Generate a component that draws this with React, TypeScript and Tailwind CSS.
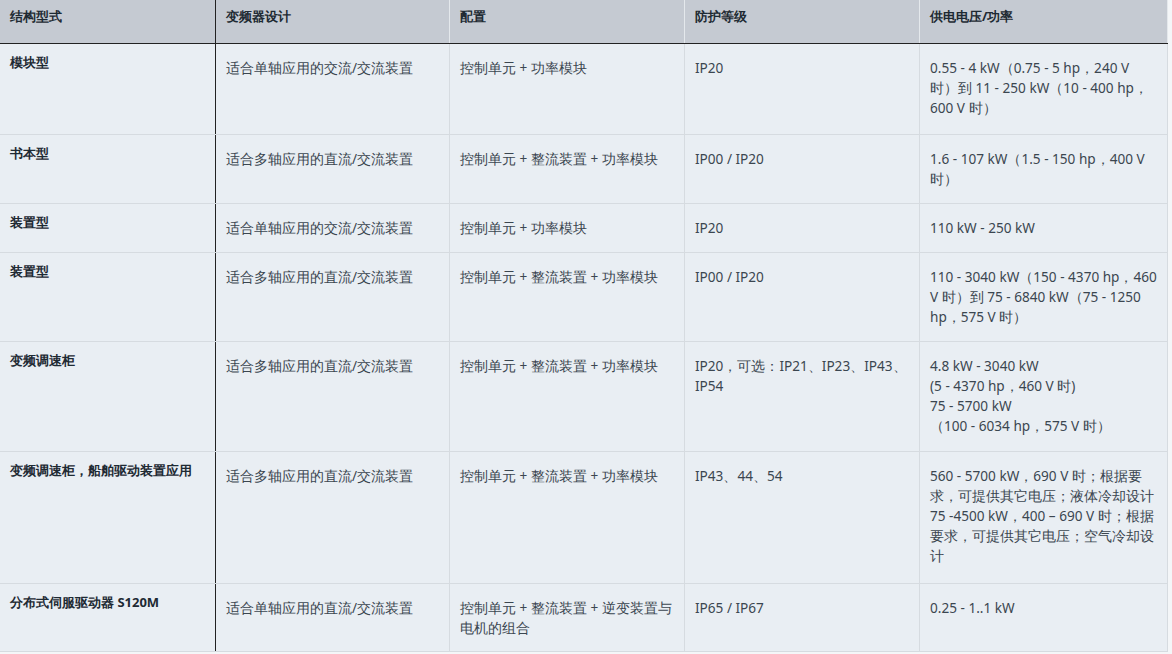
const rows: { h: string; c: string[] }[] = [
  { h: "h-[91px]", c: ["模块型", "适合单轴应用的交流/交流装置", "控制单元 + 功率模块", "IP20", "0.55 - 4 kW（0.75 - 5 hp，240 V 时）到 11 - 250 kW（10 - 400 hp，600 V 时）"] },
  { h: "h-[69px]", c: ["书本型", "适合多轴应用的直流/交流装置", "控制单元 + 整流装置 + 功率模块", "IP00 / IP20", "1.6 - 107 kW（1.5 - 150 hp，400 V 时）"] },
  { h: "h-[49px]", c: ["装置型", "适合单轴应用的交流/交流装置", "控制单元 + 功率模块", "IP20", "110 kW - 250 kW"] },
  { h: "h-[89px]", c: ["装置型", "适合多轴应用的直流/交流装置", "控制单元 + 整流装置 + 功率模块", "IP00 / IP20", "110 - 3040 kW（150 - 4370 hp，460 V 时）到 75 - 6840 kW（75 - 1250 hp，575 V 时）"] },
  { h: "h-[110px]", c: ["变频调速柜", "适合多轴应用的直流/交流装置", "控制单元 + 整流装置 + 功率模块", "IP20，可选：IP21、IP23、IP43、IP54", "4.8 kW - 3040 kW\n(5 - 4370 hp，460 V 时)\n75 - 5700 kW\n（100 - 6034 hp，575 V 时）"] },
  { h: "h-[132px]", c: ["变频调速柜，船舶驱动装置应用", "适合多轴应用的直流/交流装置", "控制单元 + 整流装置 + 功率模块", "IP43、44、54", "560 - 5700 kW，690 V 时；根据要求，可提供其它电压；液体冷却设计 75 -4500 kW，400 – 690 V 时；根据要求，可提供其它电压；空气冷却设计"] },
  { h: "h-[68px]", c: ["分布式伺服驱动器 S120M", "适合单轴应用的直流/交流装置", "控制单元 + 整流装置 + 逆变装置与电机的组合", "IP65 / IP67", "0.25 - 1..1 kW"] },
];
const heads = ["结构型式", "变频器设计", "配置", "防护等级", "供电电压/功率"];
const widths = ["w-[216px]", "w-[234px]", "w-[235px]", "w-[235px]", "w-[248px]"];

export default function App() {
  return (
    <div className="h-[654px] w-[1172px] bg-[#f4f6f8] font-['Open_Sans','Noto_Sans_CJK_SC',sans-serif] text-[13.6px] overflow-hidden">
      <div className="w-[1168px]">
        <div className="flex h-[44px] border-b border-[#222] bg-[#c5cad2] font-bold text-[#1e2a33] text-[13px]">
          {heads.map((t, i) => (
            <div key={i} className={`${widths[i]} px-[10px] pt-[7px] ${i === 0 ? "border-r border-[#222]" : "border-r border-[#e4e8ec]"}`}>{t}</div>
          ))}
        </div>
        {rows.map((r, ri) => (
          <div key={ri} className={`flex ${r.h} border-b border-[#d6dbe0] bg-[#e9eef3] text-[#3b4650] leading-[20px]`}>
            {r.c.map((t, i) => (
              <div key={i} className={`${widths[i]} px-[10px] whitespace-pre-line ${i === 0 ? "pt-[8px] font-bold text-[13px] text-[#1e2a33] border-r border-[#222]" : "pt-[14px] border-r border-[#d6dbe0]"}`}>{t}</div>
            ))}
          </div>
        ))}
      </div>
    </div>
  );
}
